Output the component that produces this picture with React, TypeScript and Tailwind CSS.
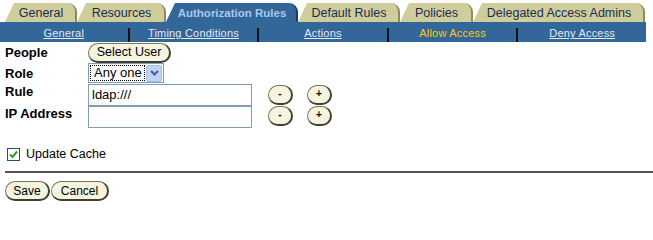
import React from "react";

const tabs = [
  { label: "General", w: "w-[72px]" },
  { label: "Resources", w: "w-[89px]" },
  { label: "Authorization Rules", w: "w-[132px]", active: true },
  { label: "Default Rules", w: "w-[102px]" },
  { label: "Policies", w: "w-[73px]" },
  { label: "Delegated Access Admins", w: "w-[172px]" },
];

const subs = [
  { label: "General" },
  { label: "Timing Conditions" },
  { label: "Actions" },
  { label: "Allow Access", active: true },
  { label: "Deny Access" },
];

const btn =
  "flex items-center justify-center rounded-full bg-[#f4f4e0] border border-[#77775a] border-r-2 border-b-2 border-r-[#3f3f2c] border-b-[#3f3f2c] text-black text-[12px] leading-none";

function Tab({ label, w, active }: { label: string; w: string; active?: boolean }) {
  return (
    <div className={`relative h-[19px] ${w} flex items-center justify-center pt-[2px]`}>
      <div
        className={`absolute inset-0 rounded-tr-[9px] border-r-2 [clip-path:polygon(9px_0,100%_0,100%_100%,0_100%)] ${
          active ? "bg-[#336699] border-[#1d3d5f]" : "bg-[#d0cd9c] border-[#8e8c5e]"
        }`}
      />
      <span
        className={`relative whitespace-nowrap ${
          active ? "text-[11.5px] font-bold text-[#a9c8ee]" : "text-[12.5px] text-[#1a2c52]"
        }`}
      >
        {label}
      </span>
    </div>
  );
}

function SmallBtn({ children }: { children: React.ReactNode }) {
  return <div className={`${btn} w-[25px] h-[20px] !text-[10px] font-bold pb-[1px]`}>{children}</div>;
}

export default function App() {
  return (
    <div className="w-[653px] h-[219px] bg-white overflow-hidden font-['Liberation_Sans',Arial,sans-serif] text-black">
      {/* Tabs */}
      <div className="flex items-end h-[22px] pl-[5px]">
        {tabs.map((t) => (
          <Tab key={t.label} {...t} />
        ))}
      </div>
      {/* Sub nav */}
      <div className="flex w-[646px] h-[20px] bg-[#336699]">
        {subs.map((s, i) => (
          <React.Fragment key={s.label}>
            {i > 0 && <div className="self-end w-[2px] h-[14px] bg-[#111]" />}
            <div className="flex-1 flex items-center justify-center pt-[3px]">
              <span
                className={`text-[11px] tracking-[0.2px] ${
                  s.active ? "text-[#ffcc00]" : "text-[#e4e9f0] underline underline-offset-[1px]"
                }`}
              >
                {s.label}
              </span>
            </div>
          </React.Fragment>
        ))}
      </div>

      {/* Form */}
      <div className="flex flex-col pl-[5px]">
        <div className="flex h-[21px]">
          <div className="w-[83px] flex items-center font-bold text-[13px]">People</div>
          <div className={`${btn} w-[83px] h-[20px] self-end !text-[12.5px]`}>Select User</div>
        </div>
        <div className="flex h-[21px]">
          <div className="w-[83px] flex items-center font-bold text-[13px]">Role</div>
          <div className="flex items-center w-[76px] h-[20px] border border-[#7f9db9] bg-white">
            <div className="flex-1 h-[16px] ml-[1px] border border-dotted border-black flex items-center pl-[3px] text-[13px]">
              Any one
            </div>
            <div className="w-[16px] h-[17px] mx-[1px] bg-[#c0d2f7] border border-[#aabff0] rounded-[2px] flex items-center justify-center">
              <svg width="9" height="6" viewBox="0 0 9 6">
                <path d="M1 1 L4.5 4.5 L8 1" fill="none" stroke="#4d6185" strokeWidth="2" />
              </svg>
            </div>
          </div>
        </div>
        <div className="flex h-[22px]">
          <div className="w-[83px] font-bold text-[13px] leading-[16px]">Rule</div>
          <div className="w-[164px] h-[22px] border border-[#7f9db9] flex items-center pl-[3px] text-[13px]">
            ldap:///
          </div>
          <div className="ml-[16px] mt-[1px]">
            <SmallBtn>-</SmallBtn>
          </div>
          <div className="ml-[14px] mt-[1px]">
            <SmallBtn>+</SmallBtn>
          </div>
        </div>
        <div className="flex h-[22px]">
          <div className="w-[83px] font-bold text-[13px] leading-[16px]">IP Address</div>
          <div className="w-[164px] h-[22px] border border-[#7f9db9]" />
          <div className="ml-[16px]">
            <SmallBtn>-</SmallBtn>
          </div>
          <div className="ml-[14px]">
            <SmallBtn>+</SmallBtn>
          </div>
        </div>

        <div className="flex items-center h-[13px] mt-[20px] ml-[2px] gap-[6px]">
          <div className="w-[13px] h-[13px] border border-[#1c5180] bg-white flex items-center justify-center">
            <svg width="9" height="9" viewBox="0 0 9 9">
              <path d="M1 4.5 L3.5 7 L8 1.5" fill="none" stroke="#21a121" strokeWidth="2" />
            </svg>
          </div>
          <span className="text-[12.5px]">Update Cache</span>
        </div>

        <div className="h-[2px] bg-[#555] mt-[10px]" />

        <div className="flex gap-[1px] mt-[8px]">
          <div className={`${btn} w-[45px] h-[20px]`}>Save</div>
          <div className={`${btn} w-[58px] h-[20px]`}>Cancel</div>
        </div>
      </div>
    </div>
  );
}
